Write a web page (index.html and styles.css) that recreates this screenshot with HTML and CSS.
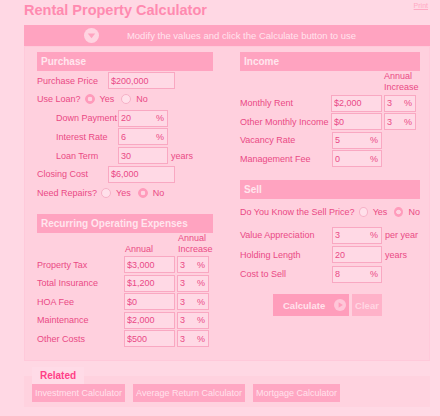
FILE: index.html
```html
<!DOCTYPE html>
<html>
<head>
    <title>Rental Property Calculator</title>
    <link rel="stylesheet" href="styles.css">
</head>
<body>
    <div class="page">
        <div class="top">
            <h1>Rental Property Calculator</h1>
            <a class="print" href="#">Print</a>
        </div>

        <div class="bar">
            <svg class="bar-icon" width="15" height="15" viewBox="0 0 15 15">
                <circle cx="7.5" cy="7.5" r="7.5" fill="#ffd4e1"/>
                <path d="M3.8 5.6h7.4L7.5 10.2z" fill="#ffa3c0"/>
            </svg>
            <span>Modify the values and click the Calculate button to use</span>
        </div>

        <div class="panel">
            <!-- left column -->
            <div class="col col-left">
                <div class="sec-head">Purchase</div>
                <div class="rows rows-purchase">
                    <div class="row">
                        <span class="lbl w71">Purchase Price</span>
                        <div class="field w67"><input value="$200,000"></div>
                    </div>
                    <div class="row">
                        <span class="lbl">Use Loan?</span>
                        <span class="radio on"></span><span class="opt">Yes</span>
                        <span class="radio"></span><span class="opt">No</span>
                    </div>
                    <div class="row indent">
                        <span class="lbl w62">Down Payment</span>
                        <div class="field w50"><input value="20"><span class="unit">%</span></div>
                    </div>
                    <div class="row indent">
                        <span class="lbl w62">Interest Rate</span>
                        <div class="field w50"><input value="6"><span class="unit">%</span></div>
                    </div>
                    <div class="row indent">
                        <span class="lbl w62">Loan Term</span>
                        <div class="field w50"><input value="30"></div>
                        <span class="after">years</span>
                    </div>
                    <div class="row">
                        <span class="lbl w71">Closing Cost</span>
                        <div class="field w67"><input value="$6,000"></div>
                    </div>
                    <div class="row">
                        <span class="lbl">Need Repairs?</span>
                        <span class="radio"></span><span class="opt">Yes</span>
                        <span class="radio on"></span><span class="opt">No</span>
                    </div>
                </div>

                <div class="sec-head sec-gap">Recurring Operating Expenses</div>
                <div class="colhead colhead-exp">
                    <span class="ch-annual">Annual</span>
                    <span>Annual<br>Increase</span>
                </div>
                <div class="rows">
                    <div class="row">
                        <span class="lbl w87">Property Tax</span>
                        <div class="field w51"><input value="$3,000"></div>
                        <div class="field w32 pct"><input value="3"><span class="unit">%</span></div>
                    </div>
                    <div class="row">
                        <span class="lbl w87">Total Insurance</span>
                        <div class="field w51"><input value="$1,200"></div>
                        <div class="field w32 pct"><input value="3"><span class="unit">%</span></div>
                    </div>
                    <div class="row">
                        <span class="lbl w87">HOA Fee</span>
                        <div class="field w51"><input value="$0"></div>
                        <div class="field w32 pct"><input value="3"><span class="unit">%</span></div>
                    </div>
                    <div class="row">
                        <span class="lbl w87">Maintenance</span>
                        <div class="field w51"><input value="$2,000"></div>
                        <div class="field w32 pct"><input value="3"><span class="unit">%</span></div>
                    </div>
                    <div class="row">
                        <span class="lbl w87">Other Costs</span>
                        <div class="field w51"><input value="$500"></div>
                        <div class="field w32 pct"><input value="3"><span class="unit">%</span></div>
                    </div>
                </div>
            </div>

            <!-- right column -->
            <div class="col col-right">
                <div class="sec-head">Income</div>
                <div class="colhead colhead-inc">
                    <span>Annual<br>Increase</span>
                </div>
                <div class="rows">
                    <div class="row">
                        <span class="lbl w91">Monthly Rent</span>
                        <div class="field w51"><input value="$2,000"></div>
                        <div class="field w32 pct"><input value="3"><span class="unit">%</span></div>
                    </div>
                    <div class="row">
                        <span class="lbl w91">Other Monthly Income</span>
                        <div class="field w51"><input value="$0"></div>
                        <div class="field w32 pct"><input value="3"><span class="unit">%</span></div>
                    </div>
                    <div class="row">
                        <span class="lbl w92">Vacancy Rate</span>
                        <div class="field w50"><input value="5"><span class="unit">%</span></div>
                    </div>
                    <div class="row">
                        <span class="lbl w92">Management Fee</span>
                        <div class="field w50"><input value="0"><span class="unit">%</span></div>
                    </div>
                </div>

                <div class="sec-head sec-gap-r">Sell</div>
                <div class="row sell-q">
                    <span class="lbl">Do You Know the Sell Price?</span>
                    <span class="radio"></span><span class="opt">Yes</span>
                    <span class="radio on"></span><span class="opt">No</span>
                </div>
                <div class="rows rows-sell">
                    <div class="row">
                        <span class="lbl w92">Value Appreciation</span>
                        <div class="field w50"><input value="3"><span class="unit">%</span></div>
                        <span class="after">per year</span>
                    </div>
                    <div class="row">
                        <span class="lbl w92">Holding Length</span>
                        <div class="field w50"><input value="20"></div>
                        <span class="after">years</span>
                    </div>
                    <div class="row">
                        <span class="lbl w92">Cost to Sell</span>
                        <div class="field w50"><input value="8"><span class="unit">%</span></div>
                    </div>
                </div>

                <div class="buttons">
                    <button class="btn btn-calc">
                        Calculate
                        <svg width="12" height="12" viewBox="0 0 12 12">
                            <circle cx="6" cy="6" r="6" fill="#ffc6d8"/>
                            <path d="M4.6 3.2v5.6L8.9 6z" fill="#ff9dbb"/>
                        </svg>
                    </button>
                    <button class="btn btn-clear">Clear</button>
                </div>
            </div>
        </div>

        <fieldset class="related">
            <legend>Related</legend>
            <div class="links">
                <a class="link" href="#">Investment Calculator</a>
                <a class="link" href="#">Average Return Calculator</a>
                <a class="link" href="#">Mortgage Calculator</a>
            </div>
        </fieldset>
    </div>
</body>
</html>
```

FILE: styles.css
```css
body {
    margin: 0;
    font-family: "Liberation Sans", Arial, sans-serif;
    background: #ffd8e4;
    color: #ea4a85;
}

.page {
    width: 406px;
    margin-left: 24px;
}

.top {
    display: flex;
    justify-content: space-between;
    height: 25px;
}

h1 {
    margin: 0;
    font-size: 14.5px;
    line-height: 20px;
    color: #ff8ab0;
}

.print {
    font-size: 7px;
    line-height: 9px;
    color: #ffa9c3;
    margin-top: 1px;
    margin-right: 2px;
}

.bar {
    height: 21px;
    background: #ffa3c0;
    display: flex;
    align-items: center;
    justify-content: center;
    gap: 28px;
    padding-right: 14px;
    color: #ffe4ee;
    font-size: 9.5px;
}

.panel {
    display: flex;
    gap: 27px;
    background: #ffd0de;
    border: 1px solid #ffc9da;
    padding: 5px 9px 13px 12px;
}

.col-left {
    width: 176px;
}

.col-right {
    width: 180px;
}

.sec-head {
    height: 19px;
    line-height: 19px;
    background: #ffa3c0;
    color: #ffe6ee;
    font-weight: bold;
    font-size: 10px;
    padding-left: 4px;
}

.sec-gap {
    margin-top: 12px;
}

.sec-gap-r {
    margin-top: 13px;
}

.rows {
    display: flex;
    flex-direction: column;
    gap: 1.5px;
}

.rows-purchase {
    gap: 1.8px;
    margin-top: 1px;
}

.rows-sell {
    gap: 2.5px;
    margin-top: 6px;
}

.row {
    display: flex;
    align-items: center;
    height: 17px;
    font-size: 9px;
    white-space: nowrap;
}

.indent {
    padding-left: 19px;
}

.lbl {
    flex-shrink: 0;
}

.w62 { width: 62px; }
.w71 { width: 71px; }
.w87 { width: 87px; }
.w91 { width: 91px; }
.w92 { width: 92px; }

.field {
    display: flex;
    align-items: center;
    box-sizing: border-box;
    height: 17px;
    border: 1px solid #f9a8c2;
    background: #ffd9e5;
    padding: 0 3px 0 2px;
    flex-shrink: 0;
}

.field input {
    border: 0;
    background: transparent;
    font: inherit;
    font-size: 9px;
    color: #ea4a85;
    padding: 0;
    width: 100%;
    min-width: 0;
    outline: none;
}

.w32 { width: 32px; }
.w50 { width: 50px; }
.w51 { width: 51px; }
.w67 { width: 67px; }

.pct {
    margin-left: 2px;
}

.unit {
    font-size: 9px;
}

.after {
    margin-left: 3px;
}

.radio {
    display: inline-block;
    box-sizing: border-box;
    width: 10px;
    height: 10px;
    border-radius: 50%;
    border: 1px solid #f6b1c7;
    background: #ffe0ea;
    margin: 0 5px 0 4px;
}

.radio.on {
    border-color: #ff9bbb;
    background: radial-gradient(circle, #ffd3e1 0 2px, #ff9bbb 2.6px);
}

.opt + .radio {
    margin-left: 7px;
}

.colhead {
    display: flex;
    align-items: flex-end;
    font-size: 9px;
    line-height: 11px;
}

.colhead-exp {
    padding-left: 87px;
    margin-bottom: 1.5px;
}

.ch-annual {
    width: 53px;
    padding-left: 1px;
}

.colhead-inc {
    padding-left: 144px;
    margin-bottom: 1.5px;
}

.sell-q {
    margin-top: 4.5px;
}

.buttons {
    display: flex;
    gap: 3px;
    margin-top: 11.5px;
    padding-left: 33px;
}

.btn {
    height: 22px;
    border: none;
    font-family: inherit;
    font-size: 9.5px;
    font-weight: bold;
    padding: 0;
    cursor: pointer;
}

.btn-calc {
    width: 76px;
    background: #ff9dbb;
    color: #ffe3ec;
    display: flex;
    align-items: center;
    gap: 9px;
    padding-left: 10px;
}

.btn-clear {
    width: 30px;
    background: #ffb2c9;
    color: #ffd7e3;
}

.related {
    margin: 6px 0 0;
    padding: 0 8px 5px;
    border: 0;
    background: #ffd2df;
    min-width: 0;
}

.related legend {
    padding: 0 8px;
    background: #ffdbe7;
    color: #ff3f88;
    font-weight: bold;
    font-size: 10px;
    line-height: 17px;
}

.links {
    display: flex;
    gap: 8px;
}

.link {
    background: #ffa7c3;
    color: #ffe2ec;
    font-size: 9px;
    line-height: 18px;
    padding: 0 3px;
    text-decoration: none;
}
```
